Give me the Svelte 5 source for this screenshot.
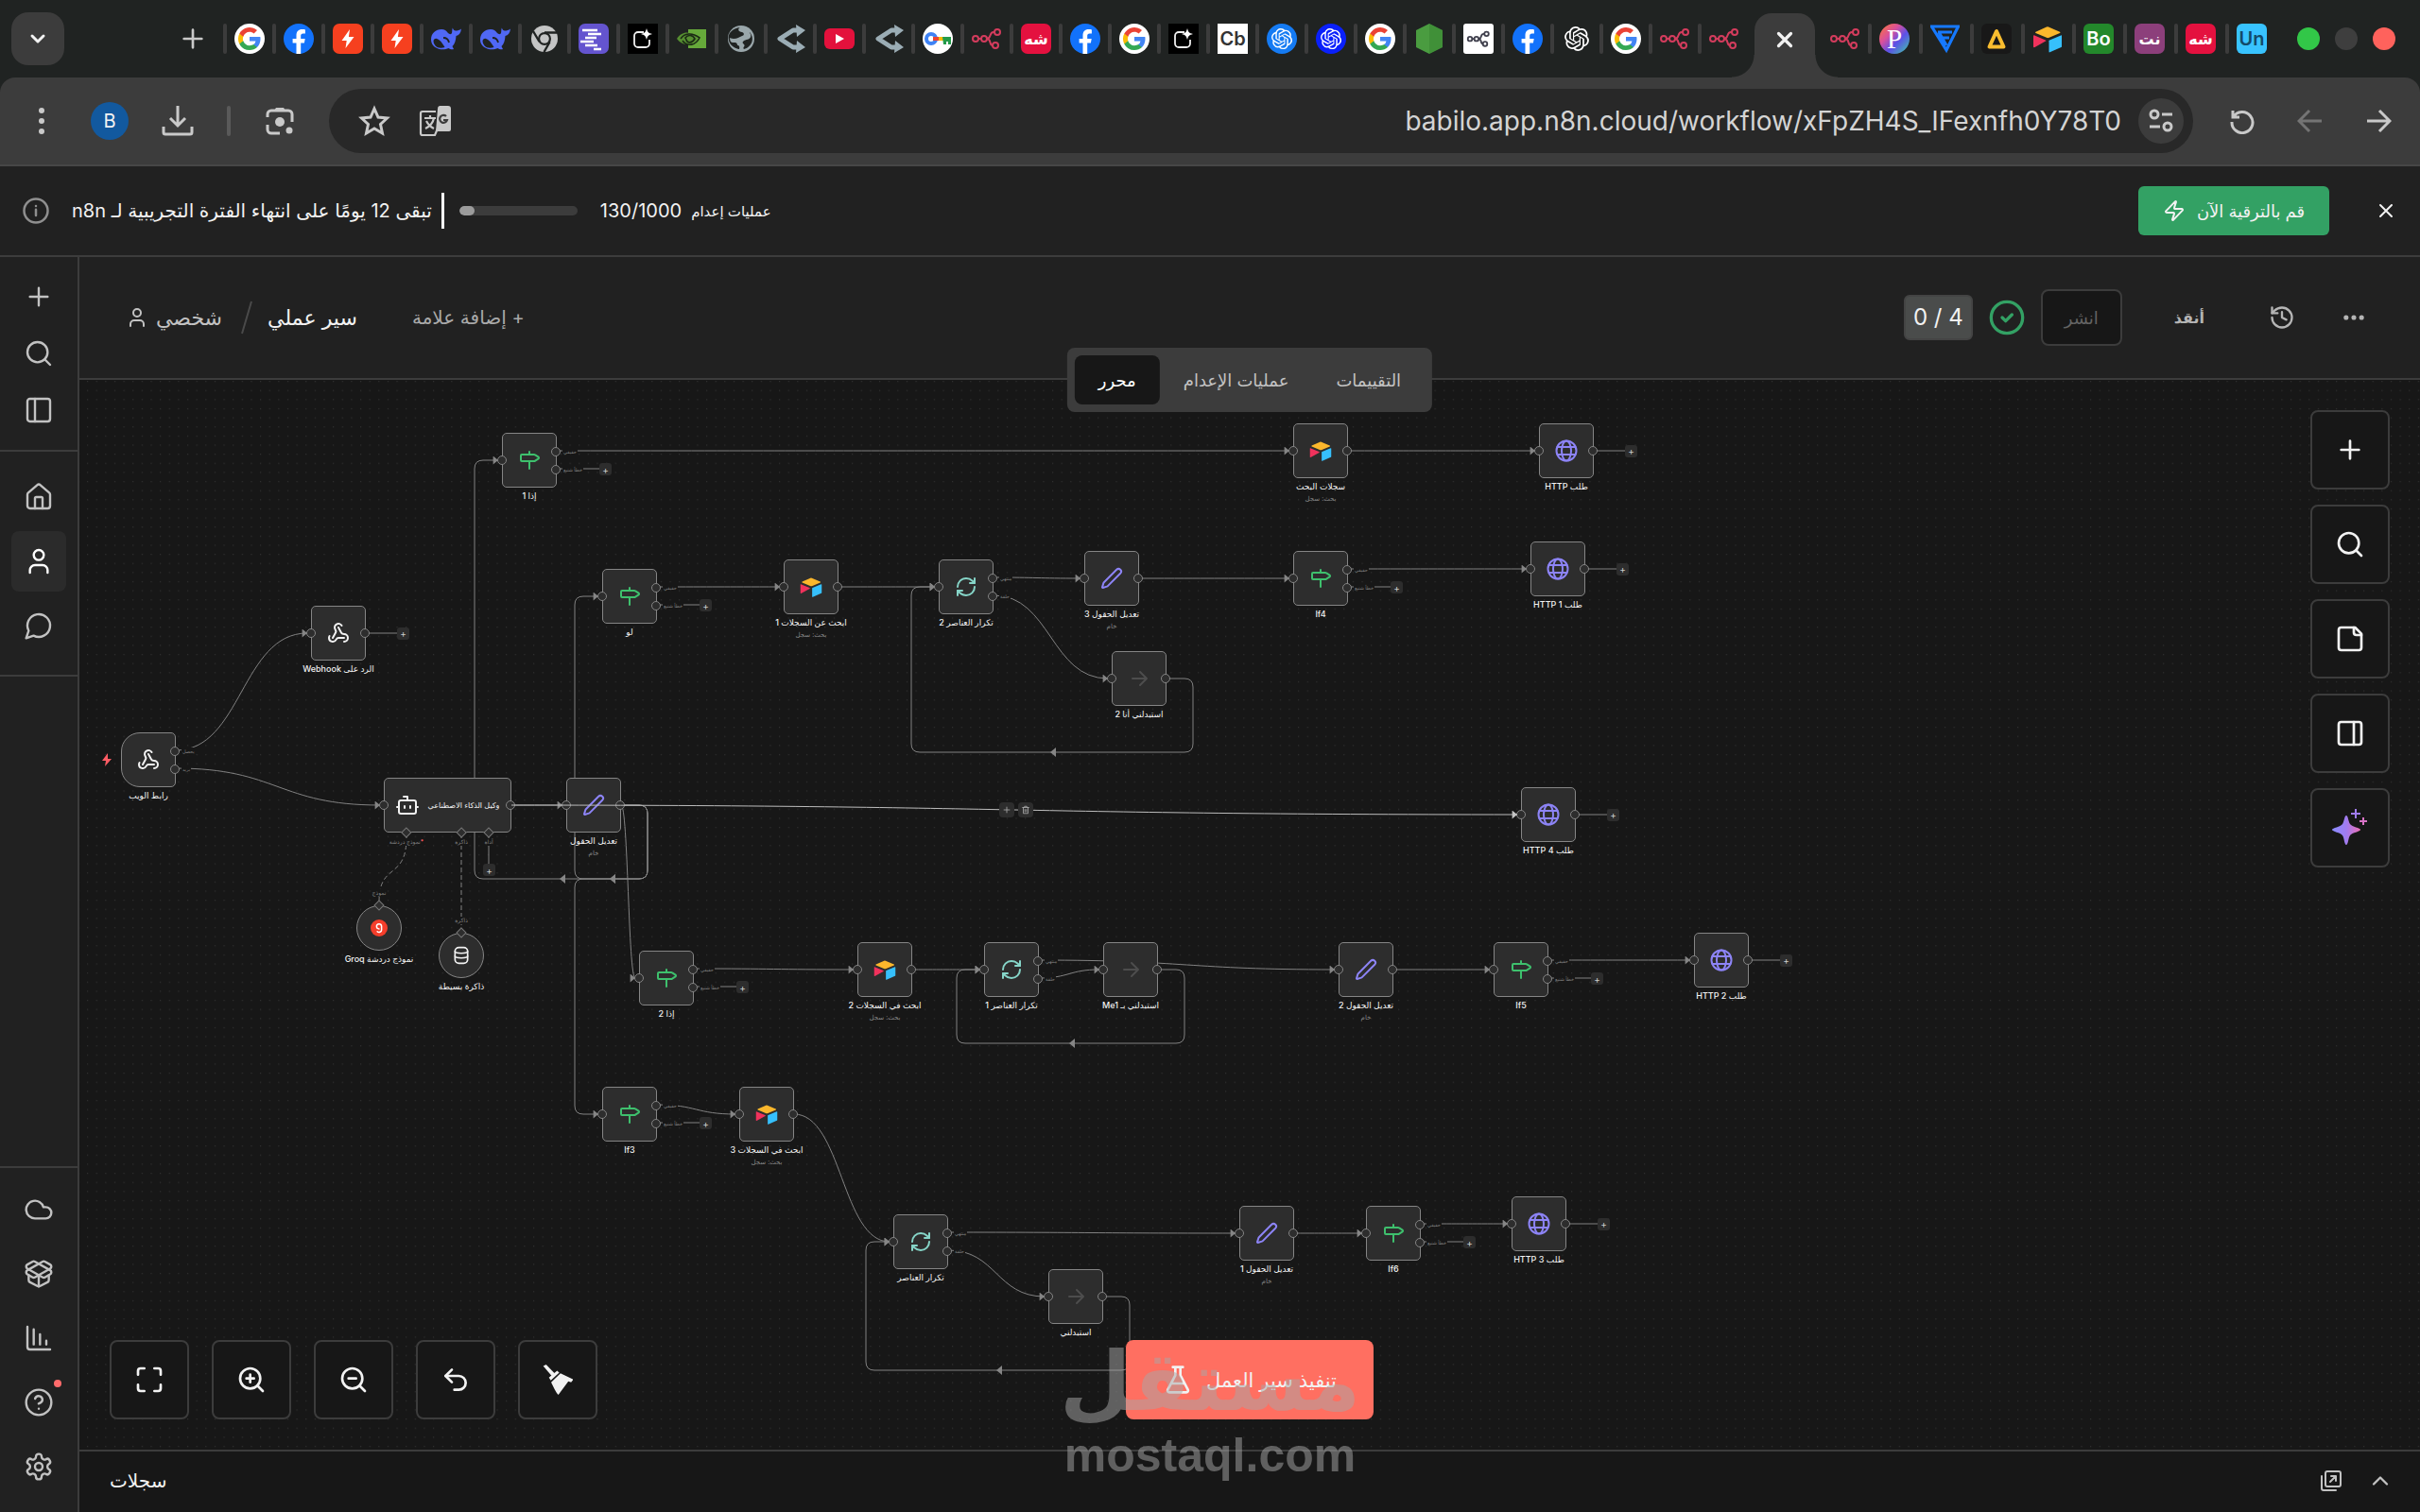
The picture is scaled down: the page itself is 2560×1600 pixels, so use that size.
<script>
  // browser tabs, left to right
  const tabs = [
    'google', 'facebook', 'bolt', 'bolt', 'whale', 'whale', 'chrome', 'lines', 'spark',
    'nvidia', 'globe', 'fork', 'youtube', 'fork', 'key', 'n8n', 'sh', 'facebook', 'google',
    'spark', 'cb', 'gptBlue', 'gptDeep', 'google', 'hex', 'n8nWhite', 'facebook', 'gpt',
    'google', 'n8n', 'n8n'
  ];
  const tabsAfter = ['n8n', 'p', 'vee', 'delta', 'airtable', 'bo', 'nt', 'sh', 'un'];

  const letterTabs = {
    sh: { text: 'شه', bg: '#e4113f', color: '#fff', size: 16, radius: 7 },
    nt: { text: 'نت', bg: '#8c3f7b', color: '#fff', size: 16, radius: 7 },
    cb: { text: 'Cb', bg: '#fff', color: '#333', size: 20, radius: 0 },
    bo: { text: 'Bo', bg: '#23882b', color: '#fff', size: 20, radius: 6 },
    un: { text: 'Un', bg: '#38c3ff', color: '#134a68', size: 20, radius: 6 }
  };

  const gptPath = 'M22.28 9.82a5.98 5.98 0 0 0-.51-4.91 6.05 6.05 0 0 0-6.51-2.9A6.07 6.07 0 0 0 4.98 4.18a5.98 5.98 0 0 0-4 2.9 6.05 6.05 0 0 0 .74 7.1 5.98 5.98 0 0 0 .51 4.91 6.05 6.05 0 0 0 6.52 2.9A5.98 5.98 0 0 0 13.26 24a6.06 6.06 0 0 0 5.77-4.21 5.99 5.99 0 0 0 4-2.9 6.06 6.06 0 0 0-.75-7.07zm-9.02 12.61a4.48 4.48 0 0 1-2.88-1.04l.14-.08 4.78-2.76a.79.79 0 0 0 .39-.68v-6.74l2.02 1.17a.07.07 0 0 1 .04.05v5.58a4.5 4.5 0 0 1-4.49 4.5zM3.6 18.3a4.47 4.47 0 0 1-.53-3.01l.14.08 4.78 2.76a.77.77 0 0 0 .78 0l5.84-3.37v2.33a.08.08 0 0 1-.03.06L9.74 19.95A4.5 4.5 0 0 1 3.6 18.3zM2.34 7.9A4.49 4.49 0 0 1 4.71 5.9v5.7a.77.77 0 0 0 .39.68l5.81 3.35-2.02 1.17a.08.08 0 0 1-.07 0L3.99 14a4.5 4.5 0 0 1-1.65-6.13zm16.6 3.86L13.1 8.36l2.02-1.16a.08.08 0 0 1 .07 0l4.83 2.79a4.49 4.49 0 0 1-.68 8.1v-5.67a.79.79 0 0 0-.4-.67zm2.01-3.02-.14-.09-4.78-2.78a.78.78 0 0 0-.78 0L9.41 9.23V6.9a.07.07 0 0 1 .03-.06l4.83-2.79a4.5 4.5 0 0 1 6.68 4.66zM8.31 12.86l-2.02-1.16a.08.08 0 0 1-.04-.06V6.07a4.5 4.5 0 0 1 7.38-3.45l-.15.08L8.7 5.46a.79.79 0 0 0-.39.68zm1.1-2.37 2.6-1.5 2.6 1.5v3l-2.6 1.5-2.6-1.5Z';
  const n8nPath = '<circle cx="4" cy="16" r="3"/><circle cx="13" cy="16" r="3"/><path d="M7 16h3M16 16c5 0 2-7 7-7h1M16 16c5 0 2 7 6 7"/><circle cx="27" cy="9" r="3"/><circle cx="25" cy="23" r="3"/>';
  const airtable = '<path fill="#fbb72c" d="M15 3.500 3.500 8.800c-.6.300-.6.900 0 1.200L15.500 15c.6.200 1 .2 1.600 0L29 10c.6-.3.600-.9 0-1.200L17 3.500a3 3 0 0 0-2 0z"/><path fill="#36c0fc" d="M17.500 18.200v11.500c0 .6.400.8.900.600l12-5.200c.4-.2.600-.4.600-.8V13c0-.6-.4-.8-.9-.6l-12 5c-.4.200-.6.400-.6.800z"/><path fill="#f0325c" d="m14 18.600-11.500 6.500c-.7.300-1.500.1-1.500-.6V13c0-.6.600-.8 1.300-.5L13.800 17.400c.7.300.8.900.2 1.200z"/>';

  // favicons, 32 x 32
  const favicons = {
    google: '<circle cx="16" cy="16" r="16" fill="#fff"/><g transform="translate(4 4)"><path fill="#4285f4" d="M23.500 12.300c0-.8-.1-1.600-.2-2.300H12v4.500h6.500a5.500 5.500 0 0 1-2.400 3.600v3h3.900c2.200-2.100 3.500-5.200 3.500-8.800z"/><path fill="#34a853" d="M12 24c3.200 0 6-1.100 8-2.900l-3.900-3c-1.100.7-2.500 1.200-4.100 1.200-3.100 0-5.800-2.100-6.700-5H1.300v3.100A12 12 0 0 0 12 24z"/><path fill="#fbbc05" d="M5.300 14.300a7.200 7.200 0 0 1 0-4.600V6.600h-4a12 12 0 0 0 0 10.800z"/><path fill="#ea4335" d="M12 4.700c1.800 0 3.300.6 4.600 1.800l3.400-3.400A12 12 0 0 0 1.300 6.600l4 3.100c.9-2.900 3.600-5 6.700-5z"/></g>',
    facebook: '<circle cx="16" cy="16" r="16" fill="#1272fb"/><path fill="#fff" d="M13.500 32V20.600H9.600V16h3.900v-3.400c0-4.200 2.300-6.500 6-6.500 1.700 0 3 .2 3.400.3v4h-2.200c-1.900 0-2.500 1-2.500 2.400V16h4.500l-.8 4.600h-3.700V32z"/>',
    bolt: '<rect width="32" height="32" rx="7" fill="#f6401f"/><path fill="#fff" d="M18 6 9.500 18h5.200L13.500 26 22.500 14h-5.600z"/>',
    whale: '<path fill="#5068f5" d="M0 17C0 10 5 6 11 6c3.500 0 5 1.500 7 4 1.500 1.500 3.500 1.500 4 0 .5-2 0-3.500.8-5.500.7 2 1.700 3 3.200 3 2 0 4-.5 6-2-.5 4.500-2.500 7-5.500 7.500-.3 5-1.500 8.500-4 11l1.500 3c-2 .8-4 0-5.500-1-7 3.500-18.500 0-18.500-9z"/><path d="M2.500 18c2-5 7.500-1 12 7-7 2.500-12-1.500-12-7z" fill="#202322"/><path d="M13 15c3.500 0 5.500 2.500 6 5" stroke="#202322" stroke-width="1.800" fill="none"/>',
    chrome: '<circle cx="16" cy="16" r="14" fill="#c4c5c5"/><circle cx="16" cy="16" r="7" fill="#202322"/><circle cx="16" cy="16" r="4.800" fill="#c4c5c5"/><path d="M16 9.500h13M10.500 19 4 8M21.500 19.500 15.500 30" stroke="#202322" stroke-width="2.400"/>',
    lines: '<rect width="32" height="32" rx="7" fill="#6454cf"/><path d="M4 7h16M10 11h14M7 15h12M2 19h14M7 23h13M16 27h8" stroke="#fff" stroke-width="2.600"/>',
    spark: '<rect width="32" height="32" fill="#000"/><path d="M17 9h-6a4 4 0 0 0-4 4v8a4 4 0 0 0 4 4h8a4 4 0 0 0 4-4v-4" stroke="#eee" stroke-width="1.800" fill="none"/><path fill="#fff" d="M20 5c1 4 2 5 6 6-4 1-5 2-6 6-1-4-2-5-6-6 4-1 5-2 6-6z"/>',
    nvidia: '<path fill="#66a93a" d="M12 6h19v20H12z"/><path d="M0 16c5-8 15-9 22 0-6 8-16 8-22 0z" fill="#568f31"/><path d="M4 16c4-6 12-7 20-1-4 8-13 10-18 3M9 15c3-4 8-3 10 1-3 5-8 5-9 1z" fill="none" stroke="#1b2a15" stroke-width="1.600"/>',
    globe: '<circle cx="16" cy="16" r="14" fill="#9aa7ab"/><path fill="#202322" d="M15 4c-3 1-2 5 2 5 3 1 2 4 0 4-3 1-5 3-9 3-2 0-4-1-4-1s0 5 3 5h3c3 1 1 3 3 3 2 1 1 4 1 4s-9-1-11-9 4-13 12-14zM19 18c4-2 6-1 7-4s-2-5-1-5c6 7 2 16-6 18-2-2 2-3 0-5s-2-2 0-4z"/>',
    fork: '<path d="M26 7h-7L5 16l14 9h7" stroke="#9badb5" stroke-width="5" fill="none" stroke-linejoin="round"/><path fill="#9badb5" d="m22 1 10 6-9 7zM23 18l9 7-10 6z"/>',
    youtube: '<rect y="5" width="32" height="22" rx="6" fill="#e3113c"/><path fill="#fff" d="m12 11 9 5-9 5z"/>',
    key: '<circle cx="16" cy="16" r="16" fill="#fff"/><circle cx="9" cy="16" r="5" fill="none" stroke="#3f83f5" stroke-width="4"/><path d="M11 16h7" stroke="#ea4335" stroke-width="4"/><path d="M17 16h6" stroke="#fbbc05" stroke-width="4"/><path d="M21 14h9v8h-3v-3h-2v3h-3z" fill="#249b49"/>',
    n8n: `<g fill="none" stroke="#d33c5d" stroke-width="2">${n8nPath}</g>`,
    n8nWhite: `<rect width="32" height="32" rx="3" fill="#fff"/><g fill="none" stroke="#40404d" stroke-width="2.400" transform="translate(4 4) scale(.76)">${n8nPath}</g>`,
    gptBlue: `<circle cx="16" cy="16" r="16" fill="#157bf3"/><path fill="#fff" transform="translate(5 5) scale(.92)" d="${gptPath}"/>`,
    gptDeep: `<circle cx="16" cy="16" r="16" fill="#0a20fb"/><path fill="#fff" transform="translate(5 5) scale(.92)" d="${gptPath}"/>`,
    gpt: `<path fill="#fff" transform="translate(3 3) scale(1.080)" d="${gptPath}"/>`,
    hex: '<path fill="#4a9c40" d="m16 0 14 7v18l-14 7-14-7V7z"/><path fill="#2f7c2c" d="m16 0 14 7v18l-14 7z" opacity=".35"/>',
    p: '<defs><linearGradient id="pg" x1="0" y1="0" x2="1" y2="1"><stop offset="0" stop-color="#ff7a2f"/><stop offset=".35" stop-color="#d94f9c"/><stop offset=".6" stop-color="#5c50e8"/><stop offset="1" stop-color="#3fd0a4"/></linearGradient></defs><circle cx="16" cy="16" r="16" fill="url(#pg)"/><text x="16" y="26" font-family="Liberation Serif, serif" font-size="29" text-anchor="middle" fill="#fff">P</text>',
    vee: '<path fill="none" stroke="#1679ff" stroke-width="3.200" d="M0 3h31M8 9h15M12 15h8M2 4l15 24L29 4M9 9l8 14"/>',
    delta: '<rect width="32" height="32" rx="6" fill="#181818"/><path d="M16 8 8.500 24.500h15z" fill="none" stroke="#f9bd2f" stroke-width="4" stroke-linejoin="round"/>',
    airtable
  };

  // 24 x 24 line icons
  const icons = {
    plus: '<path d="M5 12h14M12 5v14"/>',
    x: '<path d="M18 6 6 18M6 6l12 12"/>',
    chevronDown: '<path d="m6 9 6 6 6-6"/>',
    chevronUp: '<path d="m18 15-6-6-6 6"/>',
    search: '<circle cx="11" cy="11" r="8"/><path d="m21 21-4.300-4.300"/>',
    panelLeft: '<rect x="3" y="3" width="18" height="18" rx="2"/><path d="M9 3v18"/>',
    panelRight: '<rect x="3" y="3" width="18" height="18" rx="2"/><path d="M15 3v18"/>',
    home: '<path d="M15 21v-8a1 1 0 0 0-1-1h-4a1 1 0 0 0-1 1v8"/><path d="M3 10a2 2 0 0 1 .7-1.500l7-6a2 2 0 0 1 2.600 0l7 6A2 2 0 0 1 21 10v9a2 2 0 0 1-2 2H5a2 2 0 0 1-2-2z"/>',
    user: '<circle cx="12" cy="7" r="4"/><path d="M19 21v-2a4 4 0 0 0-4-4H9a4 4 0 0 0-4 4v2"/>',
    chat: '<path d="M7.900 20A9 9 0 1 0 4 16.100L2 22z"/>',
    cloud: '<path d="M17.500 19H9a7 7 0 1 1 6.710-9h1.790a4.500 4.500 0 1 1 0 9z"/>',
    box: '<path d="M12 22v-9M15.170 2.210a1.670 1.670 0 0 1 1.630 0L21 4.570a1.930 1.930 0 0 1 0 3.360L8.820 14.790a1.660 1.660 0 0 1-1.640 0L3 12.430a1.930 1.930 0 0 1 0-3.360z"/><path d="M20 13v3.870a2.060 2.060 0 0 1-1.110 1.830l-6 3.080a1.930 1.930 0 0 1-1.780 0l-6-3.080A2.060 2.060 0 0 1 4 16.870V13"/><path d="M21 12.430a1.930 1.930 0 0 0 0-3.360L8.830 2.200a1.640 1.640 0 0 0-1.630 0L3 4.570a1.930 1.930 0 0 0 0 3.360l12.180 6.860a1.640 1.640 0 0 0 1.630 0z"/>',
    chart: '<path d="M3 3v16a2 2 0 0 0 2 2h16M8 17V5M13 17V9M18 17v-3"/>',
    help: '<circle cx="12" cy="12" r="10"/><path d="M9.090 9a3 3 0 0 1 5.830 1c0 2-3 3-3 3M12 17h.01"/>',
    settings: '<path d="M12.220 2h-.44a2 2 0 0 0-2 2v.18a2 2 0 0 1-1 1.730l-.43.25a2 2 0 0 1-2 0l-.15-.08a2 2 0 0 0-2.730.73l-.22.380a2 2 0 0 0 .73 2.730l.15.1a2 2 0 0 1 1 1.720v.51a2 2 0 0 1-1 1.740l-.15.090a2 2 0 0 0-.73 2.730l.22.380a2 2 0 0 0 2.730.73l.15-.08a2 2 0 0 1 2 0l.43.25a2 2 0 0 1 1 1.730V20a2 2 0 0 0 2 2h.44a2 2 0 0 0 2-2v-.18a2 2 0 0 1 1-1.730l.43-.25a2 2 0 0 1 2 0l.15.080a2 2 0 0 0 2.730-.73l.22-.39a2 2 0 0 0-.73-2.730l-.15-.08a2 2 0 0 1-1-1.740v-.5a2 2 0 0 1 1-1.740l.15-.09a2 2 0 0 0 .73-2.730l-.22-.38a2 2 0 0 0-2.730-.73l-.15.080a2 2 0 0 1-2 0l-.43-.25a2 2 0 0 1-1-1.730V4a2 2 0 0 0-2-2z"/><circle cx="12" cy="12" r="3"/>',
    info: '<circle cx="12" cy="12" r="10"/><path d="M12 16v-5M12 8h.01"/>',
    zap: '<path d="M4 14a1 1 0 0 1-.78-1.630l9.900-10.200a.5.500 0 0 1 .86.460l-1.920 6.020A1 1 0 0 0 13 10h7a1 1 0 0 1 .78 1.630l-9.900 10.200a.5.500 0 0 1-.86-.46l1.920-6.020A1 1 0 0 0 11 14z"/>',
    history: '<path d="M3 12a9 9 0 1 0 9-9 9.750 9.750 0 0 0-6.740 2.740L3 8"/><path d="M3 3v5h5M12 7v5l4 2"/>',
    dots: '<g fill="currentColor"><circle cx="5" cy="12" r="1.200"/><circle cx="12" cy="12" r="1.200"/><circle cx="19" cy="12" r="1.200"/></g>',
    check: '<circle cx="12" cy="12" r="10"/><path d="m9 12 2.200 2.200 4-4"/>',
    file: '<path d="M16 3H5a2 2 0 0 0-2 2v14a2 2 0 0 0 2 2h14a2 2 0 0 0 2-2V8z"/><path d="M15 3v4a2 2 0 0 0 2 2h4"/>',
    fit: '<path d="M3 8V5a2 2 0 0 1 2-2h3M16 3h3a2 2 0 0 1 2 2v3M21 16v3a2 2 0 0 1-2 2h-3M8 21H5a2 2 0 0 1-2-2v-3"/>',
    zoomIn: '<circle cx="11" cy="11" r="8"/><path d="m21 21-4.300-4.300M11 8v6M8 11h6"/>',
    zoomOut: '<circle cx="11" cy="11" r="8"/><path d="m21 21-4.300-4.300M8 11h6"/>',
    undo: '<path d="M9 14 4 9l5-5"/><path d="M4 9h10.500a5.500 5.500 0 0 1 0 11H11"/>',
    broom: '<g fill="currentColor" stroke="none"><path d="m.5 1.200 2.300-1.200 6.700 7-2.300 2z"/><path d="m5 10.400 6.500-5.600 1.700 1.500-6.700 6.300z"/><path d="m6.800 14 7.400-7 3.900 1.800 6.400 3-1.900 2.200-2.200-.7-7.900 10.700C10.800 22.500 8.300 17 6.800 14z"/></g>',
    flask: '<path d="M14 2v6.500L20 20a1.400 1.400 0 0 1-1.300 2H5.300A1.400 1.400 0 0 1 4 20L10 8.500V2M8 2h8M7 15h10"/>',
    popout: '<rect x="6" y="2" width="16" height="16" rx="2"/><path d="M2 7v13a2 2 0 0 0 2 2h13M11 13l6-6M12 7h5v5"/>',
    signpost: '<path d="M12 13v8M12 3v3M4 6a1 1 0 0 0-1 1v5a1 1 0 0 0 1 1h13a2 2 0 0 0 1.150-.37l3.430-2.310a1 1 0 0 0 0-1.640l-3.430-2.310A2 2 0 0 0 17 6z"/>',
    webhook: '<path d="M18 16.980h-5.990c-1.100 0-1.950.94-2.480 1.900A4 4 0 0 1 2 17c.01-.7.200-1.400.57-2"/><path d="m6 17 3.130-5.780c.53-.97.100-2.180-.5-3.100a4 4 0 1 1 6.890-4.060"/><path d="m12 6 3.130 5.730C15.660 12.700 16.900 13 18 13a4 4 0 0 1 0 8"/>',
    loop: '<path d="M3 12a9 9 0 0 1 9-9 9.750 9.750 0 0 1 6.740 2.740L21 8"/><path d="M21 3v5h-5M21 12a9 9 0 0 1-9 9 9.750 9.750 0 0 1-6.740-2.740L3 16"/><path d="M8 16H3v5"/>',
    pencil: '<path d="M21.170 6.810a1 1 0 0 0-3.980-3.980L3.840 16.170a2 2 0 0 0-.5.830l-1.320 4.350a.5.500 0 0 0 .62.620l4.360-1.320a2 2 0 0 0 .83-.5z"/>',
    http: '<circle cx="12" cy="12" r="10.500"/><ellipse cx="12" cy="12" rx="5" ry="10.500"/><path d="M2.500 8h19M2.500 16h19"/>',
    arrow: '<path d="M5 12h14M13 5l7 7-7 7"/>',
    bot: '<path d="M12 7V3H8"/><rect x="3" y="7" width="18" height="14" rx="2"/><path d="M1 14h2M21 14h2M15 13v2M9 13v2"/>',
    database: '<rect x="4" y="2" width="16" height="20" rx="5"/><path d="M4 7c0 3 16 3 16 0M4 13c0 3 16 3 16 0"/>',
    groq: '<circle cx="12" cy="12" r="12" fill="#f43e2b" stroke="none"/><path d="M15.500 13.500v-4a3.500 3.500 0 1 0-3.500 3.700M15.500 13v1.500a3.500 3.500 0 0 1-6 2.400" stroke="#fff"/>',
    trash: '<path d="M4 6h16M6 6v15h12V6M9 6V3h6v3M10 11v6M14 11v6"/>'
  };

  const W = 58;
  const ifOut = ['حقيقي', 'خطأ شنيع'];
  const loopOut = ['منتهي', 'حلقة'];

  // x / y are the top left corner of the box on the canvas
  const nodes = [
    { id: 'hook', x: 44, y: 373, icon: 'webhook', label: 'رابط الويب', outs: ['يحصل', 'بريد'], trigger: true },
    { id: 'respond', x: 245, y: 239, icon: 'webhook', label: 'الرد على Webhook', stub: 0 },
    { id: 'if1', x: 447, y: 56, icon: 'signpost', label: 'إذا 1', outs: ifOut, stub: 1 },
    { id: 'if0', x: 553, y: 200, icon: 'signpost', label: 'لو', outs: ifOut, stub: 1 },
    { id: 'search1', x: 745, y: 190, icon: 'airtable', label: 'ابحث عن السجلات 1', sub: 'بحث: سجل' },
    { id: 'loop2', x: 909, y: 190, icon: 'loop', label: 'تكرار العناصر 2', outs: loopOut },
    { id: 'edit3', x: 1063, y: 181, icon: 'pencil', label: 'تعديل الحقول 3', sub: 'خام' },
    { id: 'noop2', x: 1092, y: 287, icon: 'arrow', label: 'استبدلني أنا 2' },
    { id: 'if4', x: 1284, y: 181, icon: 'signpost', label: 'If4', outs: ifOut, stub: 1 },
    { id: 'http1', x: 1535, y: 171, icon: 'http', label: 'طلب HTTP 1', stub: 0 },
    { id: 'search', x: 1284, y: 46, icon: 'airtable', label: 'سجلات البحث', sub: 'بحث: سجل' },
    { id: 'http', x: 1544, y: 46, icon: 'http', label: 'طلب HTTP', stub: 0 },
    { id: 'edit', x: 515, y: 421, icon: 'pencil', label: 'تعديل الحقول', sub: 'خام' },
    { id: 'http4', x: 1525, y: 431, icon: 'http', label: 'طلب HTTP 4', stub: 0 },
    { id: 'if2', x: 592, y: 604, icon: 'signpost', label: 'إذا 2', outs: ifOut, stub: 1 },
    { id: 'search2', x: 823, y: 595, icon: 'airtable', label: 'ابحث في السجلات 2', sub: 'بحث: سجل' },
    { id: 'loop1', x: 957, y: 595, icon: 'loop', label: 'تكرار العناصر 1', outs: loopOut },
    { id: 'noop1', x: 1083, y: 595, icon: 'arrow', label: 'استبدلني بـ Me1' },
    { id: 'edit2', x: 1332, y: 595, icon: 'pencil', label: 'تعديل الحقول 2', sub: 'خام' },
    { id: 'if5', x: 1496, y: 595, icon: 'signpost', label: 'If5', outs: ifOut, stub: 1 },
    { id: 'http2', x: 1708, y: 585, icon: 'http', label: 'طلب HTTP 2', stub: 0 },
    { id: 'if3', x: 553, y: 748, icon: 'signpost', label: 'If3', outs: ifOut, stub: 1 },
    { id: 'search3', x: 698, y: 748, icon: 'airtable', label: 'ابحث في السجلات 3', sub: 'بحث: سجل' },
    { id: 'loop', x: 861, y: 883, icon: 'loop', label: 'تكرار العناصر', outs: loopOut },
    { id: 'noop', x: 1025, y: 941, icon: 'arrow', label: 'استبدلني' },
    { id: 'edit1', x: 1227, y: 874, icon: 'pencil', label: 'تعديل الحقول 1', sub: 'خام' },
    { id: 'if6', x: 1361, y: 874, icon: 'signpost', label: 'If6', outs: ifOut, stub: 1 },
    { id: 'http3', x: 1515, y: 864, icon: 'http', label: 'طلب HTTP 3', stub: 0 }
  ];
  const agent = { id: 'agent', x: 322, y: 421, w: 135 };
  const byId = Object.fromEntries([...nodes, agent].map(n => [n.id, n]));

  const links = [
    ['hook', 0, 'respond'], ['hook', 1, 'agent'], ['if1', 0, 'search'], ['search', 0, 'http'],
    ['if0', 0, 'search1'], ['search1', 0, 'loop2'], ['loop2', 0, 'edit3'], ['loop2', 1, 'noop2'],
    ['edit3', 0, 'if4'], ['if4', 0, 'http1'], ['edit', 0, 'if2'], ['agent', 0, 'edit'],
    ['if2', 0, 'search2'], ['search2', 0, 'loop1'], ['loop1', 0, 'edit2'], ['loop1', 1, 'noop1'],
    ['edit2', 0, 'if5'], ['if5', 0, 'http2'], ['if3', 0, 'search3'], ['search3', 0, 'loop'],
    ['loop', 0, 'edit1'], ['loop', 1, 'noop'], ['edit1', 0, 'if6'], ['if6', 0, 'http3']
  ];
  const backLinks = [
    ['noop2', 'loop2'], ['noop1', 'loop1'], ['noop', 'loop'],
    ['edit', 'if1'], ['edit', 'if0'], ['edit', 'if3']
  ];

  function outPort(n, i) {
    const dy = n.outs ? 19 + i * 19 : 29;
    return [n.x + (n.w || W), n.y + dy];
  }

  function curve([from, i, to]) {
    const [x1, y1] = outPort(byId[from], i);
    const x2 = byId[to].x - 4;
    const y2 = byId[to].y + 29;
    const c = (x2 - x1) / 2;
    return `M${x1} ${y1}C${x1 + c} ${y1} ${x2 - c} ${y2} ${x2} ${y2}`;
  }

  // goes round under the boxes and comes back in from the left
  function backPath([from, to]) {
    const [x1, y1] = outPort(byId[from], 0);
    const right = x1 + 28;
    const left = byId[to].x - 29;
    const bottom = y1 + 78;
    const y2 = byId[to].y + 29;
    const s = y2 > bottom ? 1 : -1;
    return `M${x1} ${y1}H${right - 9}q9 0 9 9V${bottom - 9}q0 9-9 9H${left + 9}q-9 0-9 ${9 * s}V${y2 - 9 * s}q0 ${9 * s} 9 ${9 * s}H${left + 25}`;
  }

  function backArrow([from, to]) {
    const [x1, y1] = outPort(byId[from], 0);
    const mid = Math.round((x1 + 28 + byId[to].x - 29) / 2);
    return `M${mid - 2} ${y1 + 78}l6-5v10z`;
  }

  let activeTab = 'محرر';
  let url = 'babilo.app.n8n.cloud/workflow/xFpZH4S_IFexnfh0Y78T0';

  const sideTop = [['plus', 'إضافة'], ['search', 'بحث'], ['panelLeft', 'الشريط الجانبي']];
  const sideMain = [['home', 'نظرة عامة'], ['user', 'شخصي'], ['chat', 'دردشة']];
  const sideBottom = [['cloud', 'السحابة'], ['box', 'القوالب'], ['chart', 'الإحصاءات'], ['help', 'مساعدة'], ['settings', 'الإعدادات']];
  const canvasTools = ['plus', 'search', 'file', 'panelRight'];
  const zoomTools = ['fit', 'zoomIn', 'zoomOut', 'undo', 'broom'];
</script>

{#snippet icon(name, size = 32)}
  <svg class="icon {name}" width={size} height={size} viewBox={name === 'airtable' ? '0 0 32 32' : '0 0 24 24'} aria-hidden="true">
    {@html name === 'airtable' ? airtable : icons[name]}
  </svg>
{/snippet}

{#snippet favicon(name)}
  <span class="tab">
    {#if letterTabs[name]}
      {@const t = letterTabs[name]}
      <span class="letters" style="background:{t.bg};color:{t.color};font-size:{t.size}px;border-radius:{t.radius}px">{t.text}</span>
    {:else}
      <svg width="32" height="32" viewBox="0 0 32 32" aria-hidden="true">{@html favicons[name]}</svg>
    {/if}
  </span>
{/snippet}

<div class="window">
  <div class="tabstrip">
    <button class="tab-search" aria-label="tabs">{@render icon('chevronDown', 24)}</button>
    <button class="new-tab" aria-label="new tab">{@render icon('plus', 32)}</button>
    <div class="tabs">
      {#each tabs as name}{@render favicon(name)}{/each}
    </div>
    <button class="current" aria-label="close tab">{@render icon('x', 26)}</button>
    <div class="tabs after">
      {#each tabsAfter as name}{@render favicon(name)}{/each}
    </div>
    <div class="lights"><i class="green"></i><i></i><i class="red"></i></div>
  </div>

  <div class="toolbar">
    <button class="bare menu" aria-label="menu">
      <svg width="8" height="30" viewBox="0 0 8 30" fill="#c9c9c9"><circle cx="4" cy="4" r="3"/><circle cx="4" cy="15" r="3"/><circle cx="4" cy="26" r="3"/></svg>
    </button>
    <button class="profile">B</button>
    <button class="bare" aria-label="downloads">
      <svg width="36" height="36" viewBox="0 0 36 36" class="thick"><path d="M18 2v21M10 15l8 8 8-8M3 24v6a2 2 0 0 0 2 2h26a2 2 0 0 0 2-2v-6"/></svg>
    </button>
    <span class="bar"></span>
    <button class="bare" aria-label="lens">
      <svg width="32" height="32" viewBox="0 0 32 32" class="thick"><path d="M3 12V9a4 4 0 0 1 4-4h18a4 4 0 0 1 4 4v8M3 20v5a4 4 0 0 0 4 4h9"/><path d="M10 5 12 2h8l2 3z" fill="#c9c9c9" stroke="none"/><circle cx="16" cy="17" r="5" fill="#c9c9c9" stroke="none"/><circle cx="26" cy="26" r="3.500" fill="#c9c9c9" stroke="none"/></svg>
    </button>
    <div class="address">
      <button class="bare" aria-label="bookmark">
        <svg width="34" height="34" viewBox="0 0 34 34" class="thick"><path d="m17 4 4 9 9.500 1-7 6.500 2 9.500-8.500-5-8.500 5 2-9.500-7-6.500 9.500-1z"/></svg>
      </button>
      <button class="bare" aria-label="translate">
        <svg width="34" height="34" viewBox="0 0 34 34"><path d="M18 7H4a2 2 0 0 0-2 2v21a2 2 0 0 0 2 2h13l3-7M6 14h12M12 11v3M16 14c-1 5-5 9-9 11M8 17c2 4 4 6 8 8" fill="none" stroke="#c9c9c9" stroke-width="2.200"/><path d="M22 1h9a3 3 0 0 1 3 3v22a2 2 0 0 1-2 2H18l2-24a3 3 0 0 1 2-3z" fill="#c9c9c9"/><path d="M29 12a4 4 0 1 0 1 4h-4" fill="none" stroke="#3c3c3c" stroke-width="2.200"/></svg>
      </button>
      <input aria-label="address" bind:value={url} />
      <button class="site" aria-label="site settings">
        <svg width="26" height="26" viewBox="0 0 26 26" class="thick"><circle cx="6" cy="6" r="4"/><path d="M14 6h11M1 19h11"/><circle cx="20" cy="19" r="4"/></svg>
      </button>
    </div>
    <button class="bare nav" aria-label="reload">
      <svg width="28" height="28" viewBox="0 0 28 28" class="thick"><path d="M4 3v7h7M4.500 10A11 11 0 1 1 3 15"/></svg>
    </button>
    <button class="bare nav dim" aria-label="back">
      <svg width="28" height="28" viewBox="0 0 28 28" class="thick"><path d="M26 14H3M13 3 2 14l11 11"/></svg>
    </button>
    <button class="bare nav" aria-label="forward">
      <svg width="28" height="28" viewBox="0 0 28 28" class="thick"><path d="M2 14h23M15 3l11 11-11 11"/></svg>
    </button>
  </div>

  <div class="banner">
    {@render icon('info', 30)}
    <span class="trial" dir="rtl">تبقى 12 يومًا على انتهاء الفترة التجريبية لـ n8n</span>
    <span class="rule"></span>
    <span class="progress"><i style="width:13%"></i></span>
    <span class="runs"><span>130/1000</span><span class="unit">عمليات إعدام</span></span>
    <button class="upgrade">{@render icon('zap', 24)}<span>قم بالترقية الآن</span></button>
    <button class="bare close" aria-label="إغلاق">{@render icon('x', 24)}</button>
  </div>

  <div class="app">
    <nav class="sidebar">
      <div class="group top">
        {#each sideTop as [name, title]}
          <button aria-label={title}>{@render icon(name)}</button>
        {/each}
      </div>
      <div class="group main-links">
        {#each sideMain as [name, title]}
          <a href="#{name}" class:selected={name === 'user'} aria-label={title}>{@render icon(name)}</a>
        {/each}
      </div>
      <div class="group bottom">
        {#each sideBottom as [name, title]}
          <a href="#{name}" aria-label={title}>
            {@render icon(name)}
            {#if name === 'help'}<i class="dot"></i>{/if}
          </a>
        {/each}
      </div>
    </nav>

    <main>
      <header>
        <a class="crumb" href="#personal">{@render icon('user', 24)}<span>شخصي</span></a>
        <svg class="slash" width="12" height="36" viewBox="0 0 12 36"><path d="M11 1 1 35"/></svg>
        <h1>سير عملي</h1>
        <button class="bare add-tag" dir="rtl">+ إضافة علامة</button>
        <span class="count">0 / 4</span>
        <span class="ok">{@render icon('check', 40)}</span>
        <button class="publish" disabled>انشر</button>
        <button class="bare save">أنقذ</button>
        <button class="bare" aria-label="السجل">{@render icon('history', 28)}</button>
        <button class="bare more" aria-label="المزيد">{@render icon('dots', 28)}</button>

        <div class="modes">
          {#each ['محرر', 'عمليات الإعدام', 'التقييمات'] as tab}
            <button class:active={activeTab === tab} on:click={() => (activeTab = tab)}>{tab}</button>
          {/each}
        </div>
      </header>

      <section class="canvas">
        <svg class="layer" width="100%" height="100%">
          <defs>
            <pattern id="dots" width="16" height="16" patternUnits="userSpaceOnUse" patternTransform="translate(8 1) scale(.602)">
              <circle cx="1" cy="1" r="1" fill="#363636" />
            </pattern>
            <marker id="tip" viewBox="0 0 6 10" refX="6" refY="5" markerWidth="6" markerHeight="9" markerUnits="userSpaceOnUse" orient="auto">
              <path d="M0 0l6 5-6 5z" fill="#858585" />
            </marker>
            <marker id="tipLight" viewBox="0 0 6 10" refX="6" refY="5" markerWidth="6" markerHeight="9" markerUnits="userSpaceOnUse" orient="auto">
              <path d="M0 0l6 5-6 5z" fill="#c4c4c4" />
            </marker>
          </defs>
          <rect width="100%" height="100%" fill="url(#dots)" />
          <g class="wires">
            {#each links as link}<path d={curve(link)} marker-end="url(#tip)" />{/each}
            {#each backLinks as link}
              <path d={backPath(link)} marker-end="url(#tip)" />
              <path class="solid" d={backArrow(link)} />
            {/each}
            {#each nodes.filter(n => n.stub !== undefined) as n}
              {@const [px, py] = outPort(n, n.stub)}
              <path d="M{px} {py}h{n.outs ? 46 : 34}" />
            {/each}
            <path class="dashed" d="M346 484C346 530 317 510 317 552" />
            <path class="dashed" d="M404 484V582" />
            <path d="M433 484V512" />
          </g>
        </svg>

        {#each nodes as n}
          <div class="node" class:trigger={n.trigger} style="left:{n.x}px;top:{n.y}px">
            {@render icon(n.icon, 24)}
            {#if !n.trigger}<i class="port in"></i>{/if}
            {#if n.trigger}
              <svg class="flash" width="10" height="14" viewBox="0 0 10 14"><path d="M6 0 0 8h4L3 14l7-8H6z" fill="#ff5c64" /></svg>
            {/if}
            <div class="outs">
              {#each n.outs || [''] as out, i}
                <div class="out">
                  <i class="port"></i>
                  {#if out}<small>{out}</small>{/if}
                  {#if n.stub === i}<button class="add" class:far={n.outs} aria-label="إضافة عقدة">+</button>{/if}
                </div>
              {/each}
            </div>
            <div class="caption" dir="rtl">
              <span>{n.label}</span>
              {#if n.sub}<em>{n.sub}</em>{/if}
            </div>
          </div>
        {/each}

        <div class="node agent" style="left:{agent.x}px;top:{agent.y}px">
          {@render icon('bot', 24)}
          <span class="name">وكيل الذكاء الاصطناعي</span>
          <i class="port in"></i>
          <div class="outs"><div class="out"><i class="port"></i></div></div>
        </div>
        {#each [[346, 'نموذج دردشة', true], [404, 'ذاكرة'], [433, 'أداة']] as [x, text, required]}
          <div class="slot" style="left:{x}px;top:473px"><i class="diamond"></i><small>{text}{#if required}<b>*</b>{/if}</small></div>
        {/each}
        <button class="add tool" style="left:427px;top:512px" aria-label="إضافة أداة">+</button>

        {#each [[293, 556, 'groq', 'نموذج', 'نموذج دردشة Groq'], [380, 585, 'database', 'ذاكرة', 'ذاكرة بسيطة']] as [x, y, name, port, label]}
          <div class="round" style="left:{x}px;top:{y}px">
            {@render icon(name, name === 'groq' ? 18 : 20)}
            <small>{port}</small>
            <i class="diamond"></i>
            <div class="caption" dir="rtl"><span>{label}</span></div>
          </div>
        {/each}

        <svg class="layer" width="100%" height="100%">
          <path class="hot" d={curve(['agent', 0, 'http4'])} marker-end="url(#tipLight)" />
        </svg>
        <div class="edge-tools" style="left:973px;top:447px">
          <button aria-label="إضافة">{@render icon('plus', 10)}</button>
          <button aria-label="حذف">{@render icon('trash', 10)}</button>
        </div>

        <div class="side-tools">
          {#each canvasTools as name}
            <button aria-label={name}>{@render icon(name)}</button>
          {/each}
          <button aria-label="AI">
            <svg width="40" height="46" viewBox="0 0 40 46">
              <defs><linearGradient id="ai" x1="0" y1="0" x2="1" y2="0"><stop offset="0" stop-color="#8a8cff" /><stop offset=".5" stop-color="#a07cf0" /><stop offset="1" stop-color="#ec6fb4" /></linearGradient></defs>
              <path fill="url(#ai)" d="M16 10c2 0 2 6 4 9s11 4 11 6-9 3-11 6-2 10-4 10-2-7-4-10-11-4-11-6 9-3 11-6 2-9 4-9z" />
              <path d="M26 3v10M21 8h10" stroke="#a07cf0" stroke-width="2" /><path d="M34 12v8M30 16h8" stroke="#d873c6" stroke-width="2" />
            </svg>
          </button>
        </div>
        <div class="zoom-tools">
          {#each zoomTools as name}
            <button aria-label={name}>{@render icon(name)}</button>
          {/each}
        </div>
        <button class="execute">{@render icon('flask', 32)}<span>تنفيذ سير العمل</span></button>
      </section>

      <footer>
        <span>سجلات</span>
        <button class="bare" aria-label="فتح">{@render icon('popout', 24)}</button>
        <button class="bare" aria-label="توسيع">{@render icon('chevronUp', 28)}</button>
      </footer>
    </main>
  </div>

  <div class="watermark"><strong>مستقل</strong><span>mostaql.com</span></div>
</div>

<style>
  :global(body) {
    background: #171717;
  }
  :global(*) {
    box-sizing: border-box;
  }
  .window {
    position: relative;
    display: flex;
    flex-direction: column;
    min-height: 100vh;
    background: #202322;
    font-family: Inter, 'DejaVu Sans', sans-serif;
    color: #f2f2f2;
    overflow: hidden;
  }
  button {
    font: inherit;
    color: inherit;
    padding: 0;
    border: 0;
    cursor: pointer;
  }
  a {
    color: inherit;
    text-decoration: none;
  }
  svg {
    display: block;
    flex: none;
  }
  .icon {
    fill: none;
    stroke: currentColor;
    stroke-width: 2;
    stroke-linecap: round;
    stroke-linejoin: round;
  }
  .icon.airtable {
    stroke: none;
  }
  .bare {
    display: flex;
    align-items: center;
    justify-content: center;
    background: none;
  }
  .thick {
    fill: none;
    stroke: #c9c9c9;
    stroke-width: 3;
  }

  /* browser */
  .tabstrip {
    display: flex;
    align-items: center;
    height: 82px;
    padding: 0 26px 0 12px;
  }
  .tab-search {
    display: grid;
    place-items: center;
    width: 56px;
    height: 56px;
    border-radius: 18px;
    background: #3c3c3c;
  }
  .tab-search .icon,
  .current .icon {
    stroke-width: 3;
  }
  .new-tab {
    margin: 0 16px 0 120px;
    background: none;
    color: #c9c9c9;
  }
  .tabs {
    display: flex;
  }
  .tab {
    display: flex;
    align-items: center;
    gap: 8px;
    width: 52px;
  }
  .tab::before {
    content: '';
    width: 4px;
    height: 32px;
    border-radius: 2px;
    background: #3c3c3c;
  }
  .after .tab {
    width: 54px;
  }
  .after .tab:first-child {
    width: 40px;
  }
  .after .tab:first-child::before {
    display: none;
  }
  .letters {
    display: grid;
    place-items: center;
    width: 32px;
    height: 32px;
    line-height: 1;
    font-weight: 600;
  }
  .current {
    position: relative;
    align-self: flex-end;
    display: grid;
    place-items: center;
    width: 64px;
    height: 68px;
    margin: 0 16px 0 8px;
    padding-bottom: 12px;
    border-radius: 18px 18px 0 0;
    background: #3c3c3c;
  }
  .current::before,
  .current::after {
    content: '';
    position: absolute;
    bottom: 0;
    width: 24px;
    height: 24px;
  }
  .current::before {
    right: 100%;
    background: radial-gradient(circle at 0 0, transparent 23px, #3c3c3c 24px);
  }
  .current::after {
    left: 100%;
    background: radial-gradient(circle at 100% 0, transparent 23px, #3c3c3c 24px);
  }
  .lights {
    display: flex;
    gap: 16px;
    margin-left: auto;
  }
  .lights i {
    width: 24px;
    height: 24px;
    border-radius: 50%;
    background: #3e3e3e;
  }
  .lights .green {
    background: #32c748;
  }
  .lights .red {
    background: #ff625c;
  }
  .toolbar {
    display: flex;
    align-items: center;
    height: 94px;
    padding: 0 30px 0 40px;
    background: #3c3c3c;
    border-bottom: 2px solid #474747;
    border-radius: 16px 16px 0 0;
  }
  .profile {
    width: 40px;
    height: 40px;
    margin: 0 34px 0 48px;
    border-radius: 50%;
    background: #12599f;
    font-size: 20px;
  }
  .bar {
    width: 4px;
    height: 32px;
    margin: 0 36px 0 34px;
    border-radius: 2px;
    background: #5a5a5a;
  }
  .address {
    flex: 1;
    display: flex;
    align-items: center;
    gap: 30px;
    height: 68px;
    margin: 0 38px 0 36px;
    padding: 0 10px 0 31px;
    border-radius: 34px;
    background: #282828;
  }
  .address input {
    flex: 1;
    border: 0;
    outline: 0;
    background: none;
    color: #d4d4d4;
    font: 28px Inter, sans-serif;
    text-align: right;
  }
  .site {
    display: grid;
    place-items: center;
    width: 48px;
    height: 48px;
    margin-left: -14px;
    border-radius: 50%;
    background: #3c3c3c;
  }
  .nav + .nav {
    margin-left: 44px;
  }
  .dim {
    opacity: 0.4;
  }

  /* trial banner */
  .banner {
    display: flex;
    align-items: center;
    height: 96px;
    padding: 0 24px 0 23px;
    background: #212121;
    border-bottom: 2px solid #3c3c3c;
  }
  .banner > .icon {
    color: #8f8f8f;
  }
  .trial {
    margin-left: 23px;
    font-size: 20px;
  }
  .rule {
    width: 3px;
    height: 38px;
    margin: 0 16px 0 10px;
    background: #fff;
  }
  .progress {
    width: 125px;
    height: 10px;
    margin-right: 24px;
    border-radius: 5px;
    background: #3c3c3c;
    overflow: hidden;
  }
  .progress i {
    display: block;
    height: 10px;
    border-radius: 5px;
    background: #9b9b9b;
  }
  .runs {
    display: flex;
    align-items: center;
    gap: 10px;
    font-size: 20px;
  }
  .unit {
    font-size: 15px;
  }
  .upgrade {
    display: flex;
    align-items: center;
    justify-content: center;
    gap: 12px;
    width: 202px;
    height: 52px;
    margin: 0 48px 0 auto;
    border-radius: 6px;
    background: #33a164;
    font-size: 18px;
  }

  /* app shell */
  .app {
    flex: 1;
    display: flex;
  }
  .sidebar {
    display: flex;
    flex-direction: column;
    width: 84px;
    background: #212121;
    border-right: 2px solid #3c3c3c;
    color: #c2c2c2;
  }
  .sidebar .icon {
    stroke-width: 1.8;
  }
  .group {
    display: flex;
    flex-direction: column;
    align-items: center;
  }
  .group button,
  .group a {
    position: relative;
    display: grid;
    place-items: center;
    width: 58px;
    height: 64px;
    border-radius: 8px;
    background: none;
  }
  .group .selected {
    background: #2b2b2b;
    color: #fff;
  }
  .top {
    padding: 12px 0;
    border-bottom: 2px solid #3c3c3c;
  }
  .group.top button {
    height: 60px;
  }
  .main-links {
    gap: 4px;
    padding: 16px 0 20px;
    border-bottom: 2px solid #3c3c3c;
  }
  .bottom {
    gap: 4px;
    margin-top: auto;
    padding: 12px 0 16px;
    border-top: 2px solid #3c3c3c;
  }
  .dot {
    position: absolute;
    top: 8px;
    right: 5px;
    width: 8px;
    height: 8px;
    border-radius: 50%;
    background: #ff6b6b;
  }
  main {
    flex: 1;
    display: flex;
    flex-direction: column;
    min-width: 0;
  }
  header {
    position: relative;
    display: flex;
    align-items: center;
    height: 130px;
    padding: 0 56px 0 49px;
    background: #212121;
    border-bottom: 2px solid #3c3c3c;
  }
  .crumb {
    display: flex;
    align-items: center;
    gap: 8px;
    color: #c2c2c2;
    font-size: 22px;
  }
  .slash {
    margin: 0 16px 0 20px;
    fill: none;
    stroke: #4a4a4a;
    stroke-width: 2;
  }
  h1 {
    margin: 0;
    font-size: 22px;
    font-weight: 400;
  }
  .add-tag {
    margin-left: 58px;
    color: #a9a9a9;
    font-size: 20px;
  }
  .count {
    margin-left: auto;
    padding: 0 8px;
    border: 2px solid #444;
    border-radius: 6px;
    background: #4a4c4b;
    font-size: 24px;
    line-height: 44px;
  }
  .ok {
    margin: 0 16px;
    color: #33a164;
  }
  .publish {
    width: 86px;
    height: 60px;
    border: 2px solid #3c3c3c;
    border-radius: 8px;
    background: #171717;
    color: #636363;
    font-size: 18px;
  }
  .save {
    margin: 0 68px 0 55px;
    color: #b5b5b5;
    font-size: 16px;
    font-weight: 600;
  }
  .save ~ .bare {
    color: #b5b5b5;
  }
  .more {
    margin-left: 48px;
  }
  .modes {
    position: absolute;
    top: 96px;
    left: 50%;
    z-index: 2;
    display: flex;
    padding: 8px;
    border-radius: 8px;
    background: #3c3c3c;
    transform: translateX(-50%);
  }
  .modes button {
    height: 52px;
    padding: 0 25px;
    border-radius: 8px;
    background: none;
    color: #c2c2c2;
    font-size: 18px;
    white-space: nowrap;
  }
  .modes .active {
    background: #171717;
    color: #fff;
  }

  /* canvas */
  .canvas {
    position: relative;
    flex: 1;
    background: #171717;
  }
  .layer {
    position: absolute;
    inset: 0;
    pointer-events: none;
  }
  .wires path {
    fill: none;
    stroke: #828282;
  }
  .wires .solid {
    fill: #858585;
    stroke: none;
  }
  .wires .dashed {
    stroke-dasharray: 5 3;
  }
  .hot {
    fill: none;
    stroke: #bdbdbd;
  }
  .node,
  .round {
    position: absolute;
    display: flex;
    align-items: center;
    justify-content: center;
    width: 58px;
    height: 58px;
    border: 1px solid #858585;
    border-radius: 5px;
    background: #2d2d2d;
  }
  .round {
    width: 48px;
    height: 48px;
    border-radius: 50%;
  }
  .trigger {
    border-radius: 20px 5px 5px 20px;
  }
  .agent {
    gap: 10px;
    width: 135px;
  }
  .name {
    font-size: 8px;
    white-space: nowrap;
  }
  .signpost {
    color: #3ec06d;
  }
  .loop {
    color: #86d5c8;
  }
  .pencil,
  .http {
    color: #8d84f6;
  }
  .arrow {
    color: #4d4d4d;
  }
  .port {
    flex: none;
    width: 10px;
    height: 10px;
    border: 1px solid #858585;
    border-radius: 50%;
    background: #2d2d2d;
  }
  .port.in {
    position: absolute;
    top: 23px;
    left: -6px;
  }
  .flash {
    position: absolute;
    left: -21px;
  }
  .outs {
    position: absolute;
    top: -1px;
    left: 51px;
    display: flex;
    flex-direction: column;
    justify-content: center;
    gap: 9px;
    height: 58px;
  }
  .agent .outs {
    left: 128px;
  }
  .out {
    position: relative;
    display: flex;
    align-items: center;
    gap: 2px;
    height: 10px;
  }
  small {
    padding: 0 1px;
    background: #171717;
    color: #808080;
    font-size: 5px;
    line-height: 8px;
    white-space: nowrap;
  }
  .add {
    display: grid;
    place-items: center;
    width: 13px;
    height: 13px;
    border-radius: 3px;
    background: #2d2d2d;
    color: #ccc;
    font-size: 10px;
    line-height: 12px;
  }
  .out .add {
    position: absolute;
    left: 39px;
  }
  .out .add.far {
    left: 51px;
  }
  .tool {
    position: absolute;
  }
  .caption {
    position: absolute;
    top: 100%;
    left: 50%;
    display: flex;
    flex-direction: column;
    align-items: center;
    padding-top: 3px;
    transform: translateX(-50%);
    white-space: nowrap;
    font-size: 9px;
    font-weight: 500;
    line-height: 14px;
  }
  .caption em {
    color: #858585;
    font-size: 7px;
    font-style: normal;
    font-weight: 400;
    line-height: 12px;
  }
  .slot {
    position: absolute;
    display: flex;
    flex-direction: column;
    align-items: center;
    transform: translateX(-50%);
  }
  .slot b {
    color: #ff5c64;
  }
  .diamond {
    width: 8px;
    height: 8px;
    margin: 2px;
    border: 1px solid #777;
    background: #2d2d2d;
    transform: rotate(45deg);
  }
  .round .diamond {
    position: absolute;
    top: -7px;
    left: 17px;
  }
  .slot small,
  .round small {
    font-size: 6px;
  }
  .round small {
    position: absolute;
    bottom: 56px;
  }
  .edge-tools {
    position: absolute;
    display: flex;
    gap: 4px;
  }
  .edge-tools button {
    display: grid;
    place-items: center;
    width: 16px;
    height: 16px;
    border-radius: 4px;
    background: #2d2d2d;
    color: #aaa;
  }
  .side-tools,
  .zoom-tools {
    position: absolute;
    display: flex;
  }
  .side-tools {
    top: 32px;
    right: 32px;
    flex-direction: column;
    gap: 16px;
  }
  .zoom-tools {
    left: 32px;
    bottom: 32px;
    gap: 24px;
  }
  .side-tools button,
  .zoom-tools button {
    display: grid;
    place-items: center;
    width: 84px;
    height: 84px;
    border: 2px solid #3c3c3c;
    border-radius: 8px;
    background: #171717;
  }
  .execute {
    position: absolute;
    bottom: 32px;
    left: 50%;
    display: flex;
    align-items: center;
    justify-content: center;
    gap: 14px;
    width: 262px;
    height: 84px;
    border-radius: 8px;
    background: #ff6f61;
    font-size: 21px;
    transform: translateX(-50%);
  }
  footer {
    display: flex;
    align-items: center;
    gap: 26px;
    height: 66px;
    padding: 0 28px 2px 32px;
    background: #171717;
    border-top: 2px solid #3c3c3c;
    font-size: 20px;
  }
  footer span {
    margin-right: auto;
  }
  footer .bare {
    color: #c2c2c2;
  }

  .watermark {
    position: absolute;
    right: 1126px;
    bottom: 32px;
    display: flex;
    flex-direction: column;
    align-items: center;
    width: 308px;
    color: #a8a8a8;
    opacity: 0.5;
    pointer-events: none;
  }
  .watermark strong {
    font: bold 87px/100px 'DejaVu Sans', sans-serif;
  }
  .watermark span {
    font: bold 50px/56px 'Liberation Sans', sans-serif;
  }
</style>
